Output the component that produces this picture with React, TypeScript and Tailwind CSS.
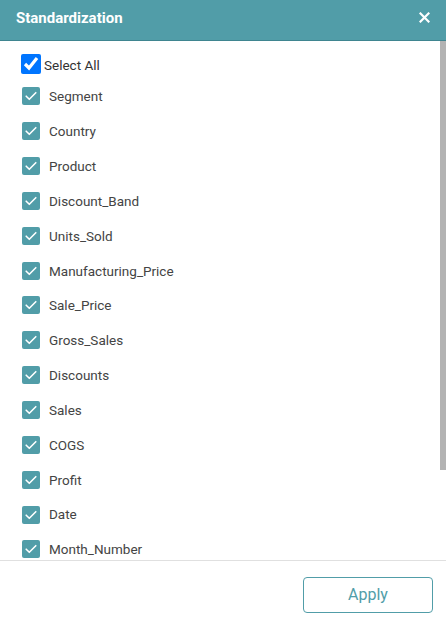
import React, { useState } from 'react';

const columns = [
  'Segment',
  'Country',
  'Product',
  'Discount_Band',
  'Units_Sold',
  'Manufacturing_Price',
  'Sale_Price',
  'Gross_Sales',
  'Discounts',
  'Sales',
  'COGS',
  'Profit',
  'Date',
  'Month_Number',
];

const CheckIcon: React.FC = () => (
  <svg width="18" height="18" viewBox="0 0 18 18" fill="none">
    <rect width="18" height="18" rx="2" fill="#519da8" />
    <path d="M4.2 9.2l3.1 3.1 6.5-6.6" stroke="#fff" strokeWidth="1.6" strokeLinecap="round" strokeLinejoin="round" />
  </svg>
);

const App: React.FC = () => {
  const [selected, setSelected] = useState<string[]>(columns);
  const allSelected = selected.length === columns.length;

  const toggle = (name: string) => {
    setSelected((prev) => (prev.includes(name) ? prev.filter((c) => c !== name) : [...prev, name]));
  };

  return (
    <div className="w-[446px] h-[626px] flex flex-col bg-white font-['Roboto',sans-serif] overflow-hidden">
      {/* Header */}
      <div className="h-[41px] shrink-0 flex items-center justify-between bg-[#519da8] border-b border-[#3f8590] pl-4 pr-[16px]">
        <h1 className="text-white text-[15px] font-bold leading-none -mt-[3px]">Standardization</h1>
        <button className="text-white -mt-[6px]" aria-label="Close">
          <svg width="11" height="11" viewBox="0 0 11 11">
            <path d="M1.5 1.5l8 8M9.5 1.5l-8 8" stroke="#fff" strokeWidth="2.2" strokeLinecap="square" />
          </svg>
        </button>
      </div>

      {/* List + scrollbar */}
      <div className="flex-1 flex min-h-0">
        <div className="flex-1 overflow-hidden pt-[13px] pl-[21px]">
          <label className="flex items-center h-5 text-[13.5px] text-[#333]">
            <input
              type="checkbox"
              checked={allSelected}
              onChange={() => setSelected(allSelected ? [] : columns)}
              className="w-5 h-5 m-0 accent-[#0075ff]"
            />
            <span className="ml-[3px] mt-[2px]">Select All</span>
          </label>
          <div className="mt-[5px] pl-px">
            {columns.map((name) => (
              <label
                key={name}
                className="flex items-center h-[34.85px] text-[13.5px] text-[#444] cursor-pointer"
                onClick={() => toggle(name)}
              >
                {selected.includes(name) ? (
                  <CheckIcon />
                ) : (
                  <span className="w-[18px] h-[18px] rounded-[2px] border-2 border-[#999]" />
                )}
                <span className="ml-[9px]">{name}</span>
              </label>
            ))}
          </div>
        </div>
        <div className="w-[6px] shrink-0">
          <div className="h-[429px] bg-[#b3b3b3]" />
        </div>
      </div>

      {/* Footer */}
      <div className="h-[66px] shrink-0 border-t border-[#e0e0e0] flex items-start justify-end pt-4 pr-[13px]">
        <button className="w-[130px] h-9 rounded-[4px] border border-[#519da8] text-[#519da8] text-[16px]">
          Apply
        </button>
      </div>
    </div>
  );
};

export default App;
